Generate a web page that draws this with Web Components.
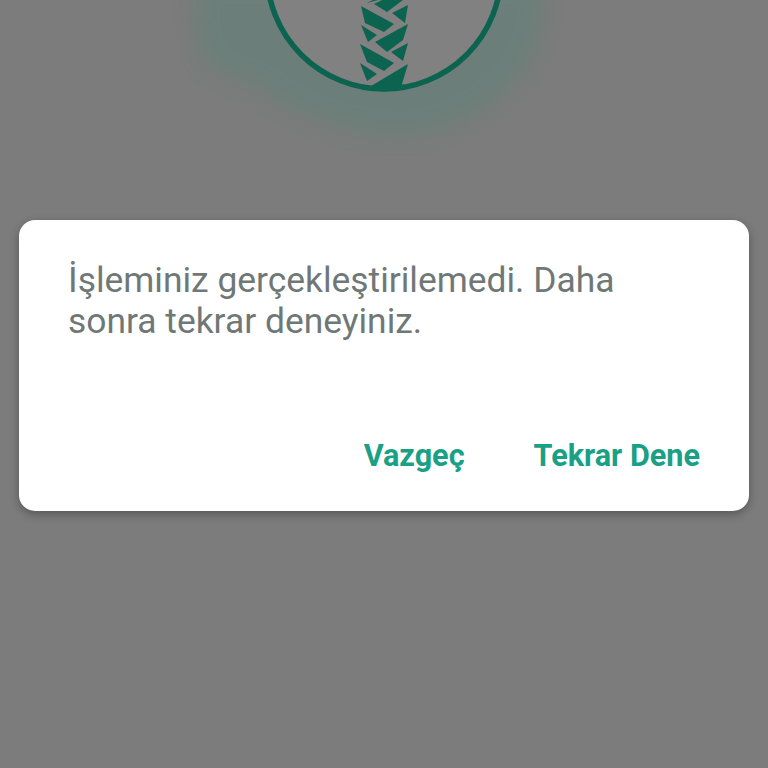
<!DOCTYPE html>
<html lang="tr">
<head>
<meta charset="utf-8">
<style>
html,body{margin:0;padding:0;background:#7b7c7b}
</style>
</head>
<body>
<app-screen>
  <brand-logo></brand-logo>
  <alert-dialog>
    <span>İşleminiz gerçekleştirilemedi. Daha sonra tekrar deneyiniz.</span>
    <dialog-action slot="actions">Vazgeç</dialog-action>
    <dialog-action slot="actions">Tekrar Dene</dialog-action>
  </alert-dialog>
</app-screen>
<script>
function def(name, html){
  customElements.define(name, class extends HTMLElement{
    constructor(){super();this.attachShadow({mode:'open'}).innerHTML=html;}
  });
}
def('app-screen',`<style>:host{display:flex;flex-direction:column;width:768px;height:768px;overflow:hidden;background:#7b7c7b;font-family:Roboto,"Liberation Sans",sans-serif}</style><slot></slot>`);
def('brand-logo',`<style>:host{display:block;width:768px;height:220px;flex:none}svg{display:block}</style>
<svg width="768" height="220" viewBox="0 0 768 220" xmlns="http://www.w3.org/2000/svg">
<defs><filter id="b" x="-20%" y="-20%" width="140%" height="140%"><feGaussianBlur stdDeviation="10"/></filter></defs>
<path d="M196 -20 L540 -20 C546 20 538 50 520 76 C498 100 468 126 420 134 C370 140 320 124 275 100 C262 82 215 78 204 60 C196 40 194 20 196 -20Z" fill="#5b8277" opacity=".48" filter="url(#b)"/>
<circle cx="384" cy="-28" r="117" fill="#808180" stroke="#0b6350" stroke-width="5.5"/>
<g fill="#0b6350">
<polygon points="367,3 373,0 378,0"/>
<polygon points="374,4 382,0 403,0 387,12"/>
<polygon points="361,6 394,24 384,32 365,23"/>
<polygon points="392,13 408,5 405,23"/>
<polygon points="361,25 377,35 368,42"/>
<polygon points="375,42 408,24 403,40 387,52"/>
<polygon points="391,52 408,43 403,61"/>
<polygon points="360,44 394,63 384,71 367,62"/>
<polygon points="360,63 377,74 367,81"/>
<polygon points="371,86 408,64 402,84 403,89 386,91 374,90"/>
</g></svg>`);
def('alert-dialog',`<style>
:host{display:flex;flex-direction:column;box-sizing:border-box;width:730px;height:291px;margin:0 19px;background:#fff;border-radius:16px;box-shadow:0 3px 10px rgba(0,0,0,.3);padding:40px 49px 0 49px;flex:none}
.msg{font-size:35.4px;line-height:41px;color:#6f7877;height:178px;flex:none;max-width:600px}
.actions{display:flex;justify-content:flex-end;gap:69px;align-items:baseline}
</style><div class="msg"><slot></slot></div><div class="actions"><slot name="actions"></slot></div>`);
def('dialog-action',`<style>:host{display:block;font-size:30.6px;font-weight:700;line-height:36px;color:#1aa085}</style><slot></slot>`);
</script>
</body>
</html>
